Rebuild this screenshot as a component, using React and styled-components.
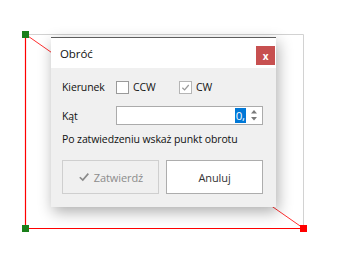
import React from "react";
import styled, { createGlobalStyle } from "styled-components";

const GlobalStyle = createGlobalStyle`
  html, body { margin: 0; padding: 0; background: #fff; }
  body { font-family: "Open Sans", "Noto Sans", sans-serif; }
`;

const Stage = styled.div`
  position: relative;
  width: 338px;
  height: 261px;
  overflow: hidden;
  background: #fff;
`;

const Drawing = styled.svg`
  position: absolute;
  left: 0;
  top: 0;
`;

const Dialog = styled.div`
  position: absolute;
  left: 51px;
  top: 37px;
  width: 225px;
  display: flex;
  flex-direction: column;
  background: #f0f0f0;
  border-top: 1px solid #5c5c5c;
  box-shadow: 2px 5px 14px rgba(0, 0, 0, 0.32);
  font-size: 10.5px;
  letter-spacing: -0.1px;
  color: #111;
`;

const TitleBar = styled.div`
  height: 30px;
  display: flex;
  align-items: center;
  justify-content: space-between;
  background: #fff;
  padding-left: 9px;
  padding-right: 1px;
  font-size: 11.5px;
`;

const CloseButton = styled.div`
  width: 19px;
  height: 19px;
  margin-top: 5px;
  background: #c75050;
  color: #fff;
  font-size: 10px;
  font-weight: 700;
  display: flex;
  align-items: center;
  justify-content: center;
  line-height: 1;
`;

const Body = styled.div`
  display: flex;
  flex-direction: column;
  padding: 10px 13px 13px 11px;
`;

const Row = styled.div`
  display: flex;
  align-items: center;
  height: ${(p) => p.$h}px;
  margin-top: ${(p) => p.$mt || 0}px;
`;

const Label = styled.span`
  width: 54px;
  flex-shrink: 0;
`;

const Option = styled.label`
  display: flex;
  align-items: center;
  gap: 4px;
  width: ${(p) => (p.$w ? `${p.$w}px` : "auto")};
`;

const Box = styled.span`
  width: 13px;
  height: 13px;
  box-sizing: border-box;
  background: #fff;
  border: 1px solid ${(p) => (p.$checked ? "#b5b5b5" : "#9a9a9a")};
  display: flex;
  align-items: center;
  justify-content: center;
`;

const NumberField = styled.div`
  width: 147px;
  height: 19px;
  box-sizing: border-box;
  background: #fff;
  border: 1px solid #ababab;
  display: flex;
  align-items: center;
  justify-content: flex-end;
`;

const Selected = styled.span`
  background: #0078d7;
  color: #fff;
  height: 15px;
  line-height: 15px;
  padding: 0 1px;
  font-size: 11.5px;
`;

const Spin = styled.div`
  width: 16px;
  height: 17px;
  display: flex;
  flex-direction: column;
  align-items: center;
  justify-content: space-around;
  padding: 1px 0;
  box-sizing: border-box;
`;

const Hint = styled.div`
  margin-top: 6px;
  height: 16px;
  line-height: 16px;
`;

const Buttons = styled.div`
  display: flex;
  gap: 7px;
  margin-top: 13px;
`;

const Button = styled.div`
  width: 97px;
  height: 34px;
  box-sizing: border-box;
  display: flex;
  align-items: center;
  justify-content: center;
  gap: 4px;
  font-size: 11px;
  background: ${(p) => (p.$disabled ? "#f0f0f0" : "#fff")};
  border: 1px solid ${(p) => (p.$disabled ? "#cfcfcf" : "#adadad")};
  color: ${(p) => (p.$disabled ? "#8c8c8c" : "#333")};
`;

const Tick = ({ color = "#8a8a8a", size = 9 }) => (
  <svg width={size} height={size} viewBox="0 0 10 10">
    <path d="M1.5 5.2 L4 7.6 L8.6 2.2" fill="none" stroke={color} strokeWidth="1.4" />
  </svg>
);

const Arrow = ({ down }) => (
  <svg width="6" height="4" viewBox="0 0 6 4">
    <path d={down ? "M0 0 H6 L3 3.5 Z" : "M0 3.5 H6 L3 0 Z"} fill="#7a7a7a" />
  </svg>
);

const App = () => (
  <>
    <GlobalStyle />
    <Stage>
      <Drawing width="338" height="261" viewBox="0 0 338 261">
        <path d="M25 34.5 H303.5 V228" fill="none" stroke="#d2d2d2" strokeWidth="1" />
        <path d="M25.5 34 V228.5 H303" fill="none" stroke="#ff0000" strokeWidth="1.2" />
        <line x1="25" y1="34" x2="303" y2="228" stroke="#ff3030" strokeWidth="1" />
        <rect x="22" y="31" width="7" height="7" fill="#1a7f1a" />
        <rect x="22" y="225" width="7" height="7" fill="#1a7f1a" />
        <rect x="300" y="225" width="7" height="7" fill="#ff0000" />
      </Drawing>
      <Dialog>
        <TitleBar>
          <span>Obróć</span>
          <CloseButton>x</CloseButton>
        </TitleBar>
        <Body>
          <Row $h={18}>
            <Label>Kierunek</Label>
            <Option $w={63}>
              <Box />
              CCW
            </Option>
            <Option>
              <Box $checked>
                <Tick color="#9a9a9a" size={9} />
              </Box>
              CW
            </Option>
          </Row>
          <Row $h={19} $mt={10}>
            <Label>Kąt</Label>
            <NumberField>
              <Selected>0,</Selected>
              <Spin>
                <Arrow />
                <Arrow down />
              </Spin>
            </NumberField>
          </Row>
          <Hint>Po zatwiedzeniu wskaż punkt obrotu</Hint>
          <Buttons>
            <Button $disabled>
              <Tick size={12} />
              Zatwierdź
            </Button>
            <Button>Anuluj</Button>
          </Buttons>
        </Body>
      </Dialog>
    </Stage>
  </>
);

export default App;
